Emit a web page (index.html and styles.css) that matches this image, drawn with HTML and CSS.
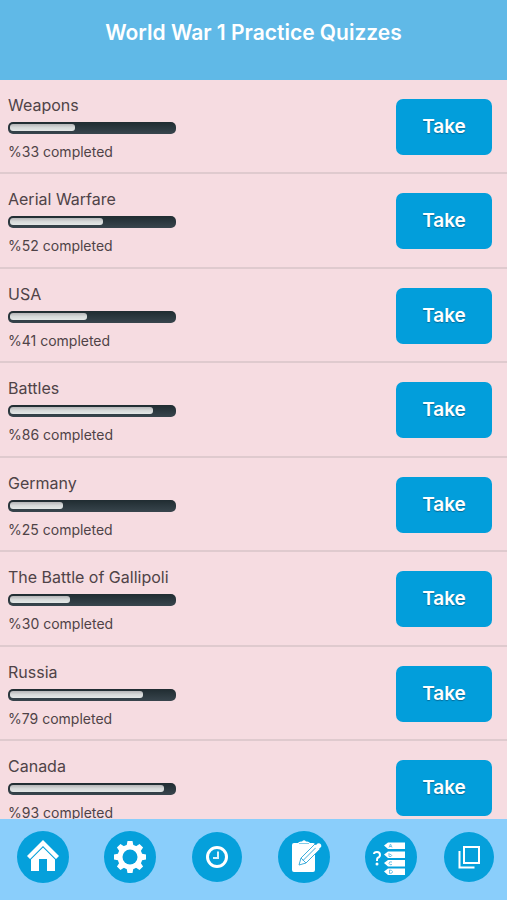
FILE: index.html
```html
<!DOCTYPE html>
<html lang="en">
<head>
<meta charset="utf-8">
<meta name="viewport" content="width=device-width, initial-scale=1">
<title>World War 1 Practice Quizzes</title>
<link rel="stylesheet" href="styles.css">
</head>
<body>
<div class="app">
  <header class="header"><h1 class="title">World War 1 Practice Quizzes</h1></header>
  <main class="content">
    <ul class="quizzes">
      <li class="quiz"><div class="info"><h2 class="name">Weapons</h2><div class="track"><div class="fill" style="width:33%"></div></div><p class="status">%33 completed</p></div><button class="take" type="button">Take</button></li>
      <li class="quiz"><div class="info"><h2 class="name">Aerial Warfare</h2><div class="track"><div class="fill" style="width:52%"></div></div><p class="status">%52 completed</p></div><button class="take" type="button">Take</button></li>
      <li class="quiz"><div class="info"><h2 class="name">USA</h2><div class="track"><div class="fill" style="width:41%"></div></div><p class="status">%41 completed</p></div><button class="take" type="button">Take</button></li>
      <li class="quiz"><div class="info"><h2 class="name">Battles</h2><div class="track"><div class="fill" style="width:86%"></div></div><p class="status">%86 completed</p></div><button class="take" type="button">Take</button></li>
      <li class="quiz"><div class="info"><h2 class="name">Germany</h2><div class="track"><div class="fill" style="width:25%"></div></div><p class="status">%25 completed</p></div><button class="take" type="button">Take</button></li>
      <li class="quiz"><div class="info"><h2 class="name">The Battle of Gallipoli</h2><div class="track"><div class="fill" style="width:30%"></div></div><p class="status">%30 completed</p></div><button class="take" type="button">Take</button></li>
      <li class="quiz"><div class="info"><h2 class="name">Russia</h2><div class="track"><div class="fill" style="width:79%"></div></div><p class="status">%79 completed</p></div><button class="take" type="button">Take</button></li>
      <li class="quiz"><div class="info"><h2 class="name">Canada</h2><div class="track"><div class="fill" style="width:93%"></div></div><p class="status">%93 completed</p></div><button class="take" type="button">Take</button></li>
    </ul>
  </main>
  <nav class="tabs">
    <button class="tab" type="button" aria-label="Home">
      <svg class="icon" viewBox="0 0 52 52"><circle class="disc" cx="26" cy="26" r="26"/><path class="solid" d="M26 9 42 25 39 28 26 15 13 28 10 25Z"/><path class="solid" d="M26 16.5 38 28.5V40H30V28H22V40H14V28.5Z"/></svg>
    </button>
    <button class="tab" type="button" aria-label="Settings">
      <svg class="icon" viewBox="0 0 52 52"><circle class="disc" cx="26" cy="26" r="26"/><g class="solid"><circle cx="26" cy="26" r="12.5"/><path d="M22.5 15 23.5 10H28.5L29.5 15ZM22.5 37 23.5 42H28.5L29.5 37Z"/><path d="M22.5 15 23.5 10H28.5L29.5 15ZM22.5 37 23.5 42H28.5L29.5 37Z" transform="rotate(45 26 26)"/><path d="M22.5 15 23.5 10H28.5L29.5 15ZM22.5 37 23.5 42H28.5L29.5 37Z" transform="rotate(90 26 26)"/><path d="M22.5 15 23.5 10H28.5L29.5 15ZM22.5 37 23.5 42H28.5L29.5 37Z" transform="rotate(135 26 26)"/></g><circle class="disc" cx="26" cy="26" r="7.5"/></svg>
    </button>
    <button class="tab" type="button" aria-label="History">
      <svg class="icon small" viewBox="0 0 50 50"><circle class="disc" cx="25" cy="25" r="25"/><circle class="line clock" cx="25" cy="25" r="9.5"/><path class="line hand" d="M26 19.5V26H21"/></svg>
    </button>
    <button class="tab" type="button" aria-label="Tests">
      <svg class="icon" viewBox="0 0 52 52"><circle class="disc" cx="26" cy="26" r="26"/><path class="solid" d="M16 12H20Q21 10 24 10.5Q26 8 28 10.5Q31 10 32 12H35Q37 12 37 14V39Q37 41 35 41H16Q14 41 14 39V14Q14 12 16 12Z"/><path class="dash" d="M21 12.5H31"/><path class="pencil" d="M21 34 23 27 37 13 42 18 28 32ZM23 27 28 32M25 29.5 38 16.5"/><path class="solid" d="M36.5 15.5 39.5 12.5Q41.5 11.5 43 13.5Q44 15.5 42.5 16.5L39.5 19Z"/></svg>
    </button>
    <button class="tab" type="button" aria-label="Questions">
      <svg class="icon" viewBox="0 0 52 52"><circle class="disc" cx="26" cy="26" r="26"/><path class="question" d="M9 23Q9 21 12 21Q15 21 15 24Q15 26 12.5 27Q12 27.5 12 30"/><circle class="solid" cx="12" cy="33" r="1.5"/><path class="solid" d="M19 14.5 23 11.5H40V18H23ZM19 23.5 23 20.5H40V27H23ZM19 32 23 29H40V35.5H23ZM19 40.5 23 37.5H40V44H23Z"/><path class="letters" d="M24 16.5 25.5 13 27 16.5M24.5 15.5H26.5M24 22V25.5H26Q27.5 24 26 23.5H24.5M27 31Q24 30 24 32.5Q24.5 34.5 27 33.5M24.5 39V42.5Q28 42.5 27.5 40.5Q27 39 24.5 39"/></svg>
    </button>
    <button class="tab" type="button" aria-label="Cards">
      <svg class="icon small" viewBox="0 0 50 50"><circle class="disc" cx="25" cy="25" r="25"/><path class="line" d="M20 15H35V31H20ZM15.5 19V35.5H30.5"/></svg>
    </button>
  </nav>
</div>
</body>
</html>
```

FILE: styles.css
```css
* {
  box-sizing: border-box;
}

body {
  margin: 0;
  font-family: Inter, "Liberation Sans", sans-serif;
  color: #4f4347;
}

.app {
  display: flex;
  flex-direction: column;
  height: 100vh;
}

.header {
  flex: none;
  padding: 20px 16px 34px;
  background: #60b9e7;
  text-align: center;
}

.title {
  margin: 0;
  font-size: 21px;
  font-weight: 600;
  line-height: 26px;
  color: #fff;
}

.content {
  flex: 1;
  min-height: 0;
  overflow-y: auto;
  scrollbar-width: none;
  background: #f6dce1;
}

.quizzes {
  display: grid;
  grid-auto-rows: 94px 95px;
  margin: 0;
  padding: 0;
  list-style: none;
}

.quiz {
  display: flex;
  justify-content: space-between;
  align-items: center;
  padding: 1px 15px 0 8px;
  border-bottom: 2px solid #dfcace;
}

.info {
  padding-top: 3px;
}

.name {
  margin: 0 0 7px;
  font-size: 16px;
  font-weight: 400;
  line-height: 20px;
}

.track {
  width: 168px;
  height: 12px;
  padding: 2px 18px 3px 2px;
  border-radius: 5px;
  background: linear-gradient(#202c31, #38454d);
}

.fill {
  box-sizing: content-box;
  height: 7px;
  padding-right: 16px;
  border-radius: 3px;
  background: linear-gradient(#b5b5b7, #d6d9d9 50%, #e4e8e7);
}

.status {
  margin: 8px 0 0;
  font-size: 14px;
  line-height: 20px;
}

.take {
  width: 96px;
  height: 56px;
  padding: 0;
  border: 0;
  border-radius: 7px;
  background: #029edb;
  color: #fff;
  font: 600 19px/24px Inter, "Liberation Sans", sans-serif;
  text-shadow: 0 1px 1px #066b98;
}

.tabs {
  flex: none;
  display: grid;
  grid-template-columns: repeat(5, 1fr) 70px;
  align-items: center;
  padding: 12px 3px 17px 0;
  background: #8acefb;
}

.tab {
  display: flex;
  justify-content: center;
  padding: 0;
  border: 0;
  background: none;
}

.icon {
  width: 52px;
  height: 52px;
}

.small {
  width: 50px;
  height: 50px;
}

.disc {
  fill: #05a0db;
}

.solid {
  fill: #fff;
}

.line {
  fill: none;
  stroke: #fff;
  stroke-width: 2;
}

.clock {
  stroke-width: 3;
}

.hand {
  stroke: #d9f1fb;
}

.pencil {
  fill: #fff;
  stroke: #3daddc;
  stroke-width: 1;
}

.dash {
  fill: none;
  stroke: #7fcbea;
  stroke-width: 1;
}

.question {
  fill: none;
  stroke: #fff;
  stroke-width: 2;
}

.letters {
  fill: none;
  stroke: #6cc4e8;
  stroke-width: 1;
}
```
